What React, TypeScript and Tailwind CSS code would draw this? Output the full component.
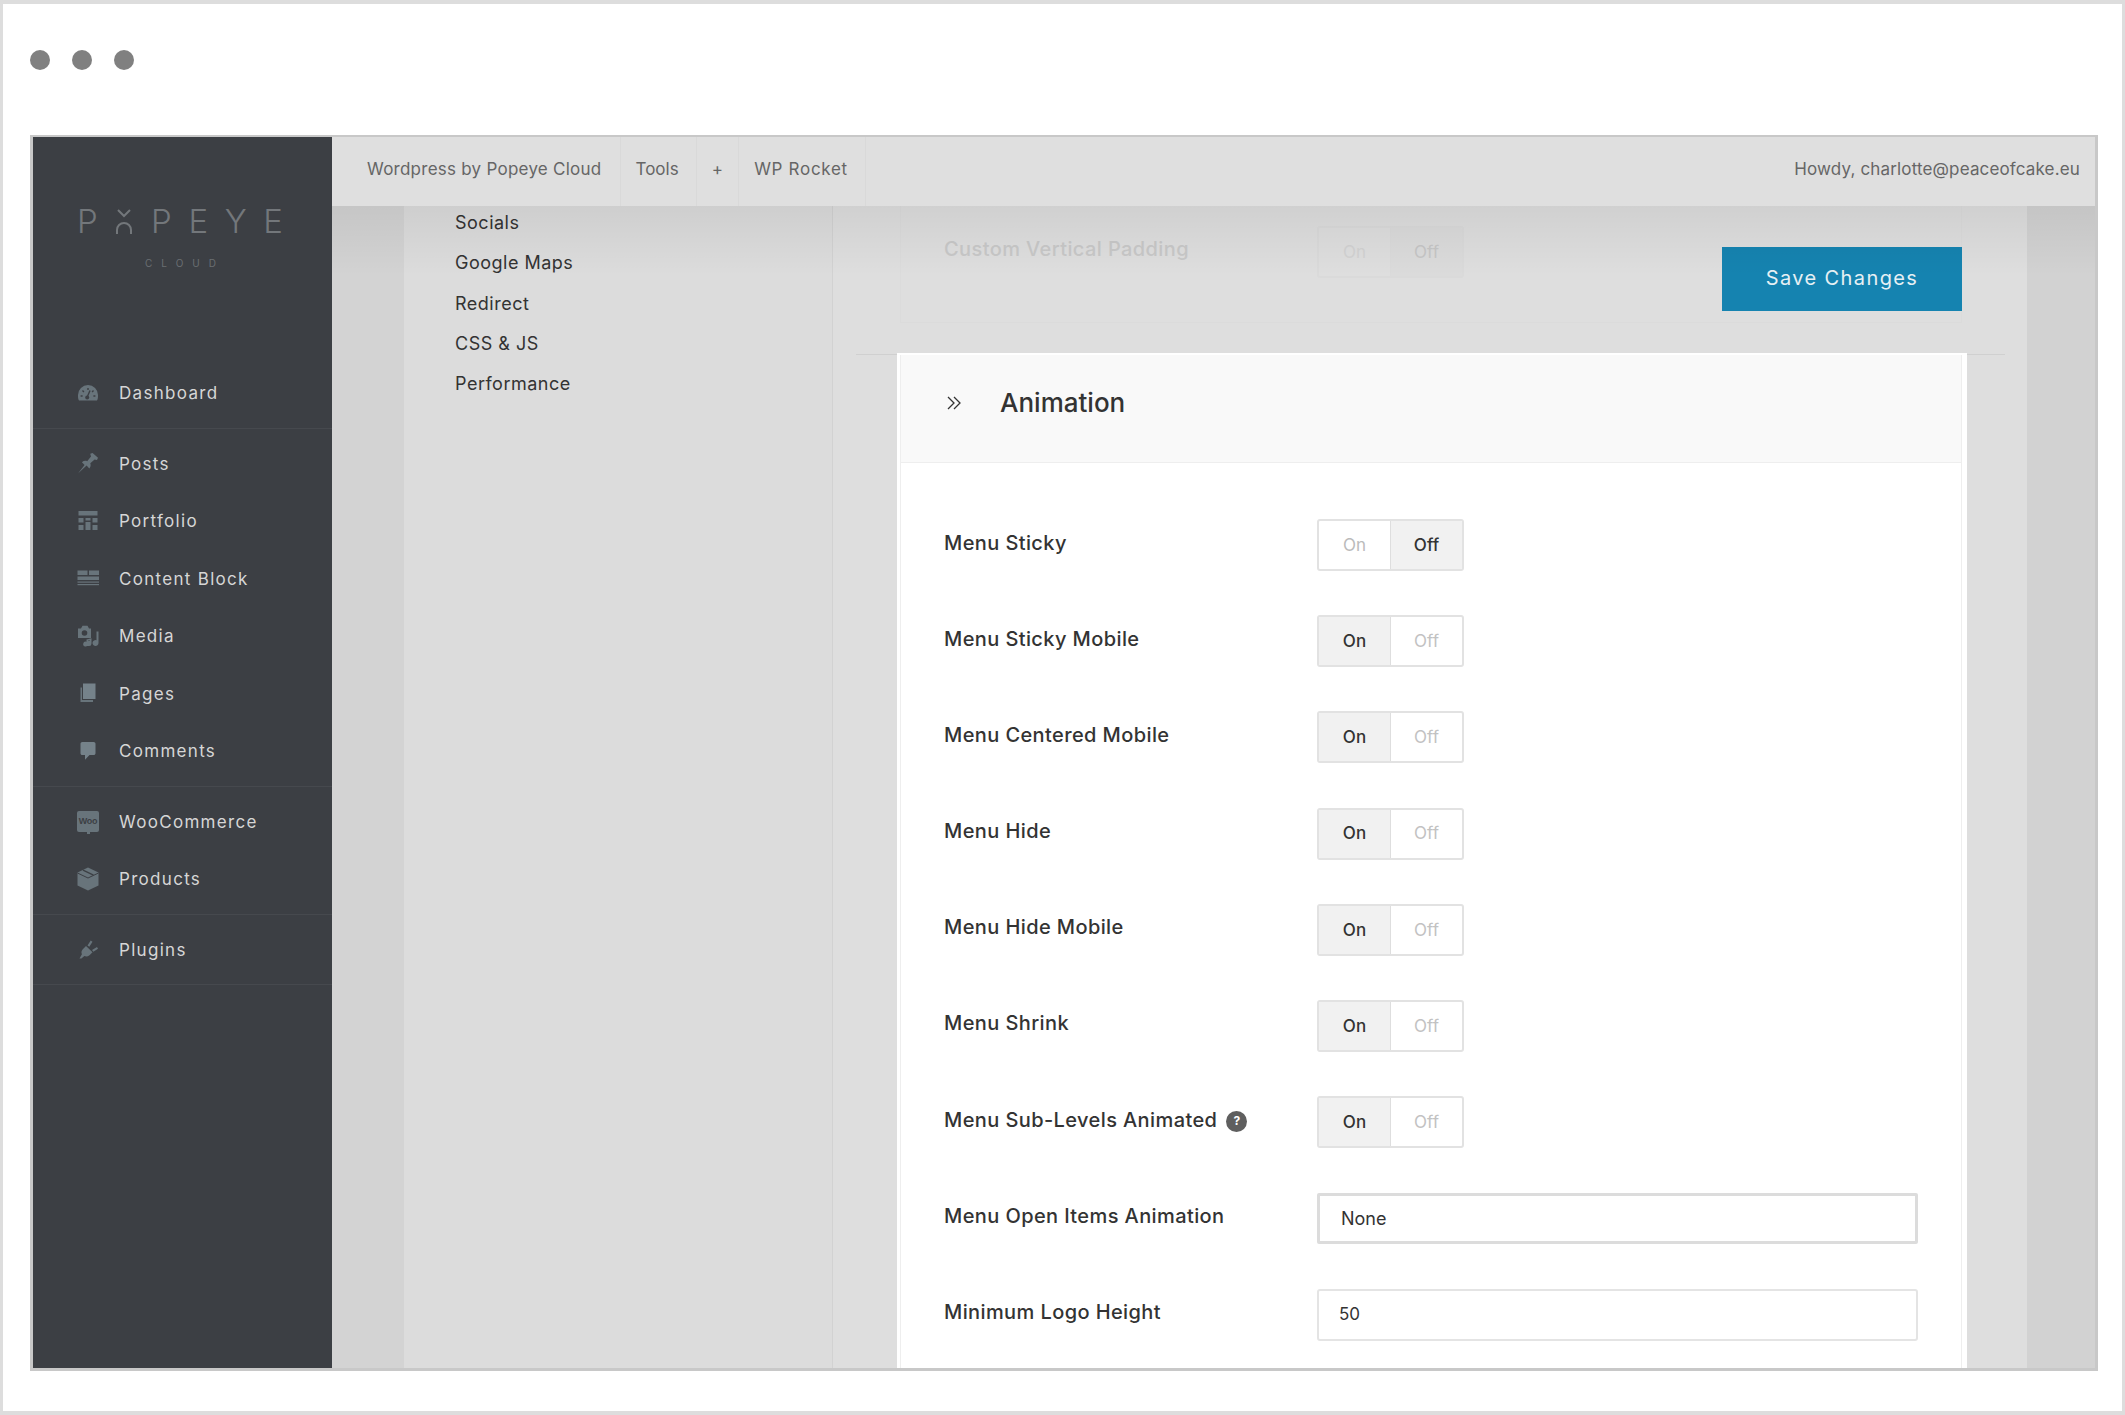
import React from 'react';

const sidebarGroups = [
  [{ label: 'Dashboard', icon: 'dashboard' }],
  [
    { label: 'Posts', icon: 'pin' },
    { label: 'Portfolio', icon: 'portfolio' },
    { label: 'Content Block', icon: 'block' },
    { label: 'Media', icon: 'media' },
    { label: 'Pages', icon: 'pages' },
    { label: 'Comments', icon: 'comments' },
  ],
  [
    { label: 'WooCommerce', icon: 'woo' },
    { label: 'Products', icon: 'products' },
  ],
  [{ label: 'Plugins', icon: 'plugins' }],
];

const settingsLinks = ['Socials', 'Google Maps', 'Redirect', 'CSS & JS', 'Performance'];

const toggleRows = [
  { label: 'Menu Sticky', on: false },
  { label: 'Menu Sticky Mobile', on: true },
  { label: 'Menu Centered Mobile', on: true },
  { label: 'Menu Hide', on: true },
  { label: 'Menu Hide Mobile', on: true },
  { label: 'Menu Shrink', on: true },
  { label: 'Menu Sub-Levels Animated', on: true, help: true },
];

const NavIcon = ({ name }: { name: string }) => {
  const fill = '#68747b';
  const bg = '#3c3f44';
  switch (name) {
    case 'dashboard':
      return (
        <svg width="22" height="18" viewBox="0 0 22 18">
          <path d="M2 16.500C.9 14.800 1 12.900 1 11a10 10 0 0 1 20 0c0 1.900.1 3.800-1 5.500z" fill={fill} />
          <path d="M11 4v2M5.500 6.500l1.400 1.400M16.500 6.500l-1.400 1.400M3.600 12h2M16.400 12h2" stroke={bg} strokeWidth="1.400" />
          <path d="M13 6.500l-2.600 6" stroke={bg} strokeWidth="1.400" />
          <circle cx="10.200" cy="13.600" r="2" fill={bg} />
        </svg>
      );
    case 'pin':
      return (
        <svg width="22" height="22" viewBox="0 0 22 22">
          <path d="M1 21.500l6.600-8.600-2.700-2.700c1.600-1.400 3.600-1.700 5.300-1L14 4.400l-.8-2.600L15.600 1 21 5.800l-1 2.300-2.400-.6-4.300 3.800c.7 1.800.4 3.800-1 5.300L9.600 13.600z" fill={fill} />
        </svg>
      );
    case 'portfolio':
      return (
        <svg width="22" height="20" viewBox="0 0 22 20">
          <g fill={fill}>
            <rect x="1.500" y="0" width="19" height="4.500" />
            <rect x="1.500" y="7" width="5" height="4.500" />
            <rect x="8.500" y="7" width="5" height="2.500" />
            <rect x="15.500" y="7" width="5" height="4.500" />
            <rect x="1.500" y="14" width="5" height="5" />
            <rect x="8.500" y="11" width="5" height="8" />
            <rect x="15.500" y="14" width="5" height="5" />
          </g>
        </svg>
      );
    case 'block':
      return (
        <svg width="22" height="16" viewBox="0 0 22 16">
          <g fill={fill}>
            <rect x="0.500" y="0.500" width="10" height="4.500" />
            <rect x="12" y="0.500" width="10" height="4.500" />
            <rect x="0.500" y="6.500" width="21.500" height="3.500" />
            <rect x="0.500" y="11.500" width="21.500" height="1.200" />
            <rect x="0.500" y="14" width="21.500" height="1.200" />
          </g>
        </svg>
      );
    case 'media':
      return (
        <svg width="22" height="22" viewBox="0 0 22 22">
          <path d="M1 3.500h3L5.500.8h5L12 3.500h2V13H1z" fill={fill} />
          <circle cx="7.500" cy="8" r="2.800" fill={bg} />
          <path d="M19.500 6.500h2V18a3 3 0 1 1-2-2.800z" fill={fill} />
          <path d="M9.500 14.500l5-1.300v5.300a2.500 2.500 0 1 1-1.800-2.400v-.9l-1.500.4v3.500a2.500 2.500 0 1 1-1.700-2.400z" fill={fill} />
        </svg>
      );
    case 'pages':
      return (
        <svg width="22" height="20" viewBox="0 0 22 20">
          <rect x="6" y="0.500" width="12.500" height="15.500" fill="#75828a" />
          <path d="M3.500 4.500H5V17h11v2H3.500z" fill={fill} />
        </svg>
      );
    case 'comments':
      return (
        <svg width="22" height="20" viewBox="0 0 22 20">
          <path d="M5.300 1h11.400c1 0 1.800.8 1.800 1.800v9.400c0 1-.8 1.800-1.800 1.800h-4.200L8 18.700V14H5.300c-1 0-1.800-.8-1.800-1.800V2.800C3.500 1.800 4.300 1 5.300 1z" fill="#75828a" />
        </svg>
      );
    case 'woo':
      return (
        <div className="relative flex h-[21px] w-[22px] items-center justify-center rounded-[2px] bg-[#68747b]">
          <span className="font-['Liberation_Sans',sans-serif] text-[9px] font-bold leading-none tracking-[-0.3px] text-[#3c3f44]">Woo</span>
          <span className="absolute -bottom-[2px] left-[10px] h-[3px] w-[3px] bg-[#68747b]" />
        </div>
      );
    case 'products':
      return (
        <svg width="22" height="24" viewBox="0 0 22 24">
          <path d="M11 .5l10.500 5v13L11 23.500.5 18.500v-13z" fill={fill} />
          <path d="M.5 6l10.500 5 10.500-5" fill="none" stroke={bg} strokeWidth="1" />
          <path d="M6 3.200l10.500 5" fill="none" stroke={bg} strokeWidth="1.300" />
        </svg>
      );
    default:
      return (
        <svg width="22" height="20" viewBox="0 0 22 20">
          <path d="M2.500 19.500l2.400-4.200c-.9-2.100-.4-3.800 1.100-5.300L9 7l6.500 6.300-3 2.900c-1.800 1.500-3.500 1.600-5.100.9l-3 2.400z" fill={fill} />
          <path d="M10.500 6.500l3.200-5 1.800 1.300-3.200 5zM15 11l5-3 1 1.800-4.600 3z" fill={fill} />
        </svg>
      );
  }
};

const Toggle = ({ on, faded }: { on: boolean; faded?: boolean }) => (
  <div
    className={`flex h-[52px] w-[147px] shrink-0 overflow-hidden rounded-[3px] border-2 text-[17px] ${
      faded ? 'h-[50px] border-[#dadada]' : 'border-[#e2e2e2] bg-white'
    }`}
  >
    <div
      className={`flex flex-1 items-center justify-center border-r pt-[1px] ${
        faded ? 'border-r-[#dadada] text-[#d2d2d2]' : on ? 'border-r-[#dedede] bg-[#f1f1f1] font-medium text-[#333333]' : 'border-r-[#dedede] text-[#bbbbbb]'
      }`}
    >
      On
    </div>
    <div
      className={`flex flex-1 items-center justify-center pt-[1px] ${
        faded ? 'bg-[#dbdbdb] text-[#c6c6c6]' : on ? 'text-[#c2c2c2]' : 'bg-[#f1f1f1] font-medium text-[#333333]'
      }`}
    >
      Off
    </div>
  </div>
);

const Row = ({ label, help, children }: { label: string; help?: boolean; children: React.ReactNode }) => (
  <div className="flex h-[52px] items-center">
    <div className="flex w-[373px] shrink-0 items-center gap-[9px] pb-[5px] text-[20px] font-medium tracking-[0.4px] text-[#333333]">
      {label}
      {help && (
        <span className="mt-[3px] flex h-[21px] w-[21px] items-center justify-center rounded-full bg-[#5f5f5f] text-[12px] font-bold tracking-normal text-white">
          ?
        </span>
      )}
    </div>
    {children}
  </div>
);

export default function App() {
  return (
    <div className="h-[1415px] w-[2125px] overflow-hidden border-x-[3px] border-y-[4px] border-[#dddddd] bg-white px-[27px] font-['Inter',sans-serif]">
      <div className="flex h-[131px] items-start gap-[22px] pt-[46px]">
        <span className="h-[20px] w-[20px] rounded-full bg-[#808080]" />
        <span className="h-[20px] w-[20px] rounded-full bg-[#808080]" />
        <span className="h-[20px] w-[20px] rounded-full bg-[#808080]" />
      </div>

      <div className="flex h-[1236px] w-[2068px] overflow-hidden border-x-[3px] border-t-[2px] border-b-[3px] border-[#c8c8c8]">
        <aside className="w-[299px] shrink-0 bg-[#3c3f44]">
          <div className="h-[221px] pt-[71px]">
            <div className="flex w-[206px] translate-x-[44px] items-center justify-between text-[33px] font-light leading-[26px] text-[#73777b]">
              <span>P</span>
              <svg width="20" height="25" viewBox="0 0 20 25" fill="none" stroke="#73777b" strokeWidth="2">
                <path d="M4 1l6 6 6-6" />
                <path d="M3 25v-4a7 7 0 0 1 14 0v4" />
              </svg>
              <span>P</span>
              <span>E</span>
              <span>Y</span>
              <span>E</span>
            </div>
            <div className="mt-[23px] pl-[5px] text-center text-[10px] leading-[12px] tracking-[9px] text-[#6a6e72]">CLOUD</div>
          </div>
          {sidebarGroups.map((group, i) => (
            <div key={i} className="border-b border-[#46494e] py-[6px]">
              {group.map(item => (
                <div key={item.label} className="flex h-[57.5px] items-center pl-[44px] text-[17px] tracking-[1.3px] text-[#d6d6d6]">
                  <span className="flex w-[22px] justify-center">
                    <NavIcon name={item.icon} />
                  </span>
                  <span className="ml-[20px] pt-[2px]">{item.label}</span>
                </div>
              ))}
            </div>
          ))}
        </aside>

        <main className="flex min-w-0 flex-1 flex-col">
          <header className="flex h-[69px] shrink-0 items-center justify-between bg-[#dfdfdf] pb-[4px] pr-[15px] text-[17px] tracking-[0.25px] text-[#666666]">
            <nav className="-mb-[4px] flex h-[69px] items-stretch">
              <span className="flex items-center border-r border-[#d9d9d9] pb-[4px] pl-[35px] pr-[18px]">Wordpress by Popeye Cloud</span>
              <span className="flex items-center border-r border-[#d9d9d9] pb-[4px] pl-[15px] pr-[17px] tracking-[0px]">Tools</span>
              <span className="flex items-center border-r border-[#d9d9d9] pb-[4px] px-[15px]">+</span>
              <span className="flex items-center border-r border-[#d9d9d9] pb-[4px] pl-[15px] pr-[17px] tracking-[0.7px]">WP Rocket</span>
            </nav>
            <span className="tracking-[0.15px]">Howdy, charlotte@peaceofcake.eu</span>
          </header>

          <div className="relative flex min-h-0 flex-1">
            <div className="w-[72px] shrink-0 bg-[#d3d3d3]" />
            <div className="flex w-[429px] shrink-0 flex-col gap-[19px] border-r border-[#d2d2d2] bg-[#dcdcdc] pl-[51px] pt-[6px] text-[18px] leading-[21.300px] tracking-[0.5px] text-[#333333]">
              {settingsLinks.map(link => (
                <div key={link}>{link}</div>
              ))}
            </div>

            <div className="relative min-w-0 flex-1 bg-[#dedede]">
              <div className="ml-[67px] mr-[65px] flex h-[117px] items-start border-x border-b border-[#dbdbdb] pl-[43px] pt-[20px]">
                <div className="w-[373px] pt-[8px] text-[20px] font-medium tracking-[0.4px] text-[#c8c8c8]">Custom Vertical Padding</div>
                <Toggle on={false} faded />
              </div>

              <div className="absolute left-[23px] right-[22px] top-[148px] h-px bg-[#d0d0d0]" />
              <button className="absolute right-[65px] top-[41px] h-[64px] w-[240px] bg-[#1583b0] pb-[2px] text-[20px] tracking-[1.4px] text-[#e6f0f4]">
                Save Changes
              </button>

              <section className="relative ml-[64px] mr-[60px] mt-[30px] border-l-[3px] border-r-[5px] border-t-[2px] border-white bg-white">
                <div className="flex h-[108px] items-center border-x border-b border-[#eeeeee] bg-[#f9f9f9] pb-[11px] pl-[46px]">
                  <svg width="14" height="14" viewBox="0 0 14 14" fill="none" stroke="#333333" strokeWidth="1.300">
                    <path d="M1 1l6 6-6 6M7 1l6 6-6 6" />
                  </svg>
                  <h2 className="ml-[39px] text-[26px] font-medium leading-none text-[#333333]">Animation</h2>
                </div>
                <div className="flex h-[1000px] flex-col gap-[44.200px] border-x border-[#eeeeee] pl-[43px] pt-[56px]">
                  {toggleRows.map(row => (
                    <Row key={row.label} label={row.label} help={row.help}>
                      <Toggle on={row.on} />
                    </Row>
                  ))}
                  <Row label="Menu Open Items Animation">
                    <div className="flex h-[51px] w-[601px] items-center rounded-[2px] border-[3px] border-[#dcdcdc] pl-[21px] text-[18px] text-[#333333]">
                      None
                    </div>
                  </Row>
                  <Row label="Minimum Logo Height">
                    <div className="flex h-[52px] w-[601px] items-center rounded-[3px] border-2 border-[#e4e4e4] pl-[20px] text-[17px] text-[#333333]">
                      50
                    </div>
                  </Row>
                </div>
              </section>
            </div>

            <div className="w-[68px] shrink-0 bg-[#d2d2d2]" />

            <div className="pointer-events-none absolute inset-x-0 top-0 h-[70px] bg-gradient-to-b from-[#00000010] to-transparent" />
          </div>
        </main>
      </div>
    </div>
  );
}
